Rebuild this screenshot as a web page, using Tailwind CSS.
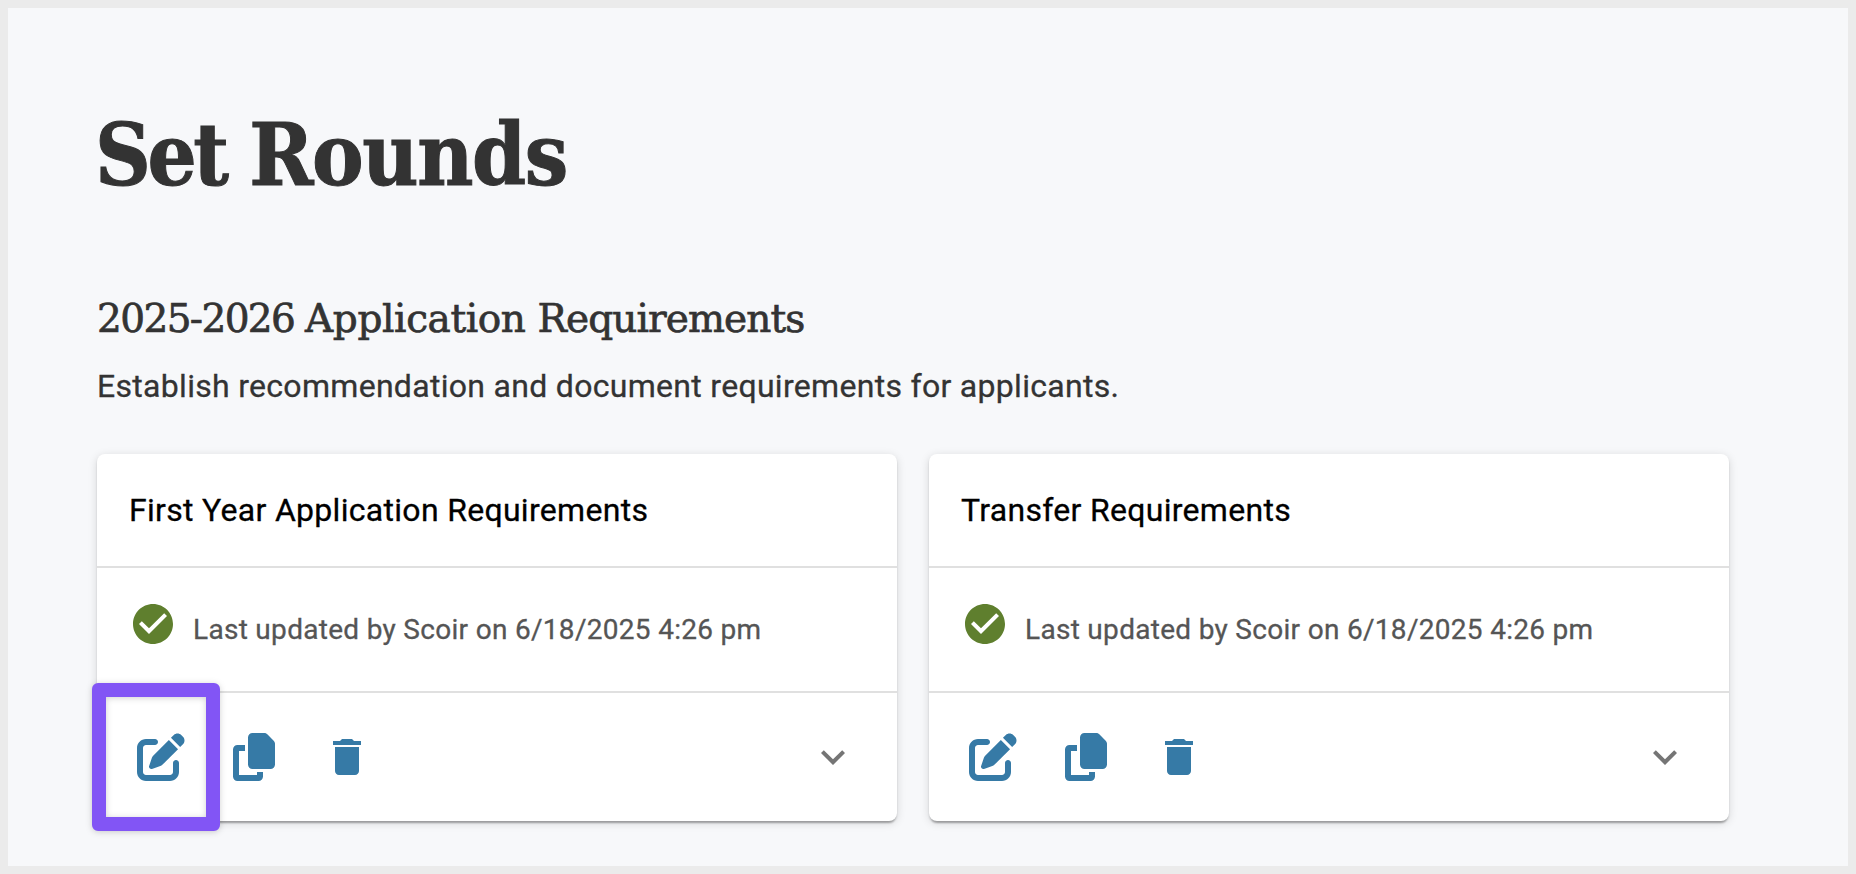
<!DOCTYPE html>
<html lang="en">
<head>
  <meta charset="UTF-8">
  <meta name="viewport" content="width=device-width, initial-scale=1.0">
  <title>Set Rounds</title>
  <script src="https://cdn.jsdelivr.net/npm/@tailwindcss/browser@4"></script>
</head>
<body class="bg-[#f7f8fa] font-['Roboto',sans-serif]">
  <main class="h-[874px] w-[1856px] overflow-hidden border-8 border-[#ebebeb] pl-[89px] pt-[94px] text-[#333333]">
    <h1 class="-ml-0.5 h-[106px] whitespace-nowrap font-['Roboto_Slab','DejaVu_Serif_Condensed','DejaVu_Serif',serif] text-[86px] font-bold leading-[106px] tracking-[-1.4px] [-webkit-text-stroke:1px_#333333]"><span class="tracking-[-3.4px]">Set </span>Rounds</h1>
    <h2 class="mt-[84px] h-[53px] whitespace-nowrap font-['Roboto_Slab','DejaVu_Serif',serif] text-[39px] leading-[53px] tracking-[-0.9px] [-webkit-text-stroke:0.7px_#333333]"><span class="tracking-[-1.6px]">2025-2026 </span><span class="tracking-[-0.4px]">Application </span>Requirements</h2>
    <p class="mt-[17px] h-12 whitespace-nowrap text-[32px] leading-12 tracking-[0.3px] [-webkit-text-stroke:0.3px_#333333]">Establish recommendation and document requirements for applicants.</p>

    <div class="mt-11 flex gap-8">
      <!-- First year -->
      <section class="relative h-[367px] w-[800px] rounded-lg bg-white shadow-[0_4px_2px_-2px_rgba(0,0,0,0.2),0_2px_2px_0_rgba(0,0,0,0.14),0_2px_10px_0_rgba(0,0,0,0.14)]">
        <h3 class="h-[114px] border-b-2 border-[#e0e0e0] px-8 text-[32px] leading-[112px] tracking-[0.3px] text-black [-webkit-text-stroke:0.3px_#000000]">First Year Application Requirements</h3>
        <div class="flex h-[125px] border-b-2 border-[#e0e0e0] pl-8 pt-8">
          <svg class="size-12 fill-[#5f7f2e]" viewBox="0 0 24 24"><path d="M12 2C6.48 2 2 6.48 2 12s4.48 10 10 10 10-4.48 10-10S17.52 2 12 2m-2 15-5-5 1.41-1.41L10 14.17l7.59-7.59L19 8z"/></svg>
          <p class="ml-4 mt-2.5 text-[28px] leading-10 tracking-[0.3px] text-[#555555] [-webkit-text-stroke:0.3px_#555555]">Last updated by Scoir on 6/18/2025 4:26 pm</p>
        </div>
        <div class="flex h-32 items-center gap-12 px-10">
          <svg class="size-12 fill-[#367aa6]" viewBox="0 0 512 512"><path d="M471.6 21.7c-21.9-21.9-57.3-21.9-79.2 0L362.3 51.7l97.9 97.9 30.1-30.1c21.9-21.9 21.9-57.3 0-79.2L471.6 21.7zm-299.2 220c-6.1 6.1-10.8 13.6-13.5 21.9l-29.6 88.8c-2.9 8.6-.6 18.1 5.8 24.6s15.9 8.7 24.6 5.8l88.8-29.6c8.2-2.7 15.7-7.4 21.9-13.5L437.7 172.3 339.7 74.3 172.4 241.7zM96 64C43 64 0 107 0 160V416c0 53 43 96 96 96H352c53 0 96-43 96-96V320c0-17.7-14.3-32-32-32s-32 14.3-32 32v96c0 17.7-14.3 32-32 32H96c-17.7 0-32-14.3-32-32V160c0-17.7 14.3-32 32-32h96c17.7 0 32-14.3 32-32s-14.3-32-32-32H96z"/></svg>
          <svg class="h-12 w-[42px] fill-[#367aa6]" viewBox="0 0 448 512"><path d="M208 0H332.1c12.7 0 24.9 5.1 33.9 14.1l67.9 67.9c9 9 14.1 21.2 14.1 33.9V336c0 26.5-21.5 48-48 48H208c-26.5 0-48-21.5-48-48V48c0-26.5 21.5-48 48-48zM48 128h80v64H64V448H256V416h64v48c0 26.5-21.5 48-48 48H48c-26.5 0-48-21.5-48-48V176c0-26.5 21.5-48 48-48z"/></svg>
          <svg class="size-12 fill-[#367aa6]" viewBox="0 0 24 24"><path d="M6 19c0 1.1.9 2 2 2h8c1.1 0 2-.9 2-2V7H6zM19 4h-3.5l-1-1h-5l-1 1H5v2h14z"/></svg>
          <svg class="ml-auto size-12 fill-[#757575]" viewBox="0 0 24 24"><path d="M16.59 8.59 12 13.17 7.41 8.59 6 10l6 6 6-6z"/></svg>
        </div>
        <!-- highlight around the edit button -->
        <div class="absolute -left-[5px] top-[229px] h-[148px] w-32 rounded-md border-14 border-[#8255f5] drop-shadow-[0_1px_3px_rgba(0,0,0,0.18)]"></div>
      </section>

      <!-- Transfer -->
      <section class="h-[367px] w-[800px] rounded-lg bg-white shadow-[0_4px_2px_-2px_rgba(0,0,0,0.2),0_2px_2px_0_rgba(0,0,0,0.14),0_2px_10px_0_rgba(0,0,0,0.14)]">
        <h3 class="h-[114px] border-b-2 border-[#e0e0e0] px-8 text-[32px] leading-[112px] tracking-[0.3px] text-black [-webkit-text-stroke:0.3px_#000000]">Transfer Requirements</h3>
        <div class="flex h-[125px] border-b-2 border-[#e0e0e0] pl-8 pt-8">
          <svg class="size-12 fill-[#5f7f2e]" viewBox="0 0 24 24"><path d="M12 2C6.48 2 2 6.48 2 12s4.48 10 10 10 10-4.48 10-10S17.52 2 12 2m-2 15-5-5 1.41-1.41L10 14.17l7.59-7.59L19 8z"/></svg>
          <p class="ml-4 mt-2.5 text-[28px] leading-10 tracking-[0.3px] text-[#555555] [-webkit-text-stroke:0.3px_#555555]">Last updated by Scoir on 6/18/2025 4:26 pm</p>
        </div>
        <div class="flex h-32 items-center gap-12 px-10">
          <svg class="size-12 fill-[#367aa6]" viewBox="0 0 512 512"><path d="M471.6 21.7c-21.9-21.9-57.3-21.9-79.2 0L362.3 51.7l97.9 97.9 30.1-30.1c21.9-21.9 21.9-57.3 0-79.2L471.6 21.7zm-299.2 220c-6.1 6.1-10.8 13.6-13.5 21.9l-29.6 88.8c-2.9 8.6-.6 18.1 5.8 24.6s15.9 8.7 24.6 5.8l88.8-29.6c8.2-2.7 15.7-7.4 21.9-13.5L437.7 172.3 339.7 74.3 172.4 241.7zM96 64C43 64 0 107 0 160V416c0 53 43 96 96 96H352c53 0 96-43 96-96V320c0-17.7-14.3-32-32-32s-32 14.3-32 32v96c0 17.7-14.3 32-32 32H96c-17.7 0-32-14.3-32-32V160c0-17.7 14.3-32 32-32h96c17.7 0 32-14.3 32-32s-14.3-32-32-32H96z"/></svg>
          <svg class="h-12 w-[42px] fill-[#367aa6]" viewBox="0 0 448 512"><path d="M208 0H332.1c12.7 0 24.9 5.1 33.9 14.1l67.9 67.9c9 9 14.1 21.2 14.1 33.9V336c0 26.5-21.5 48-48 48H208c-26.5 0-48-21.5-48-48V48c0-26.5 21.5-48 48-48zM48 128h80v64H64V448H256V416h64v48c0 26.5-21.5 48-48 48H48c-26.5 0-48-21.5-48-48V176c0-26.5 21.5-48 48-48z"/></svg>
          <svg class="size-12 fill-[#367aa6]" viewBox="0 0 24 24"><path d="M6 19c0 1.1.9 2 2 2h8c1.1 0 2-.9 2-2V7H6zM19 4h-3.5l-1-1h-5l-1 1H5v2h14z"/></svg>
          <svg class="ml-auto size-12 fill-[#757575]" viewBox="0 0 24 24"><path d="M16.59 8.59 12 13.17 7.41 8.59 6 10l6 6 6-6z"/></svg>
        </div>
      </section>
    </div>
  </main>
</body>
</html>
